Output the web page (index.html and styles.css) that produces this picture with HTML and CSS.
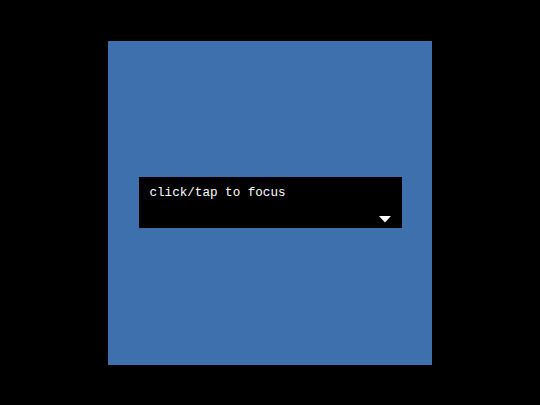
FILE: index.html
```html
<!DOCTYPE html>
<html>
<head>
<meta charset="utf-8">
<link rel="stylesheet" href="styles.css">
</head>
<body>
<div class="screen">
  <div class="canvas">
    <div class="dialog">
      <div class="msg">click/tap to focus</div>
      <div class="more"><svg width="12" height="7" viewBox="0 0 12 7"><polygon points="0,0 12,0 6,6.5" fill="#fff"/></svg></div>
    </div>
  </div>
</div>
</body>
</html>
```
FILE: styles.css
```css
html, body {
  margin: 0;
  padding: 0;
  background: #000;
}
.screen {
  width: 540px;
  height: 405px;
  display: flex;
  align-items: center;
  justify-content: center;
}
.canvas {
  width: 324px;
  height: 324px;
  background: #3e70ae;
  display: flex;
  align-items: center;
  justify-content: center;
}
.dialog {
  width: 263px;
  height: 51px;
  background: #000;
  box-sizing: border-box;
  padding: 9px 11px 5px 11px;
  display: flex;
  flex-direction: column;
  justify-content: space-between;
}
.msg {
  color: #fff;
  font-family: "Liberation Mono", "DejaVu Sans Mono", monospace;
  font-size: 12.6px;
  line-height: 15px;
}
.more {
  display: flex;
  justify-content: flex-end;
  height: 7px;
}
.more svg {
  display: block;
}
```
